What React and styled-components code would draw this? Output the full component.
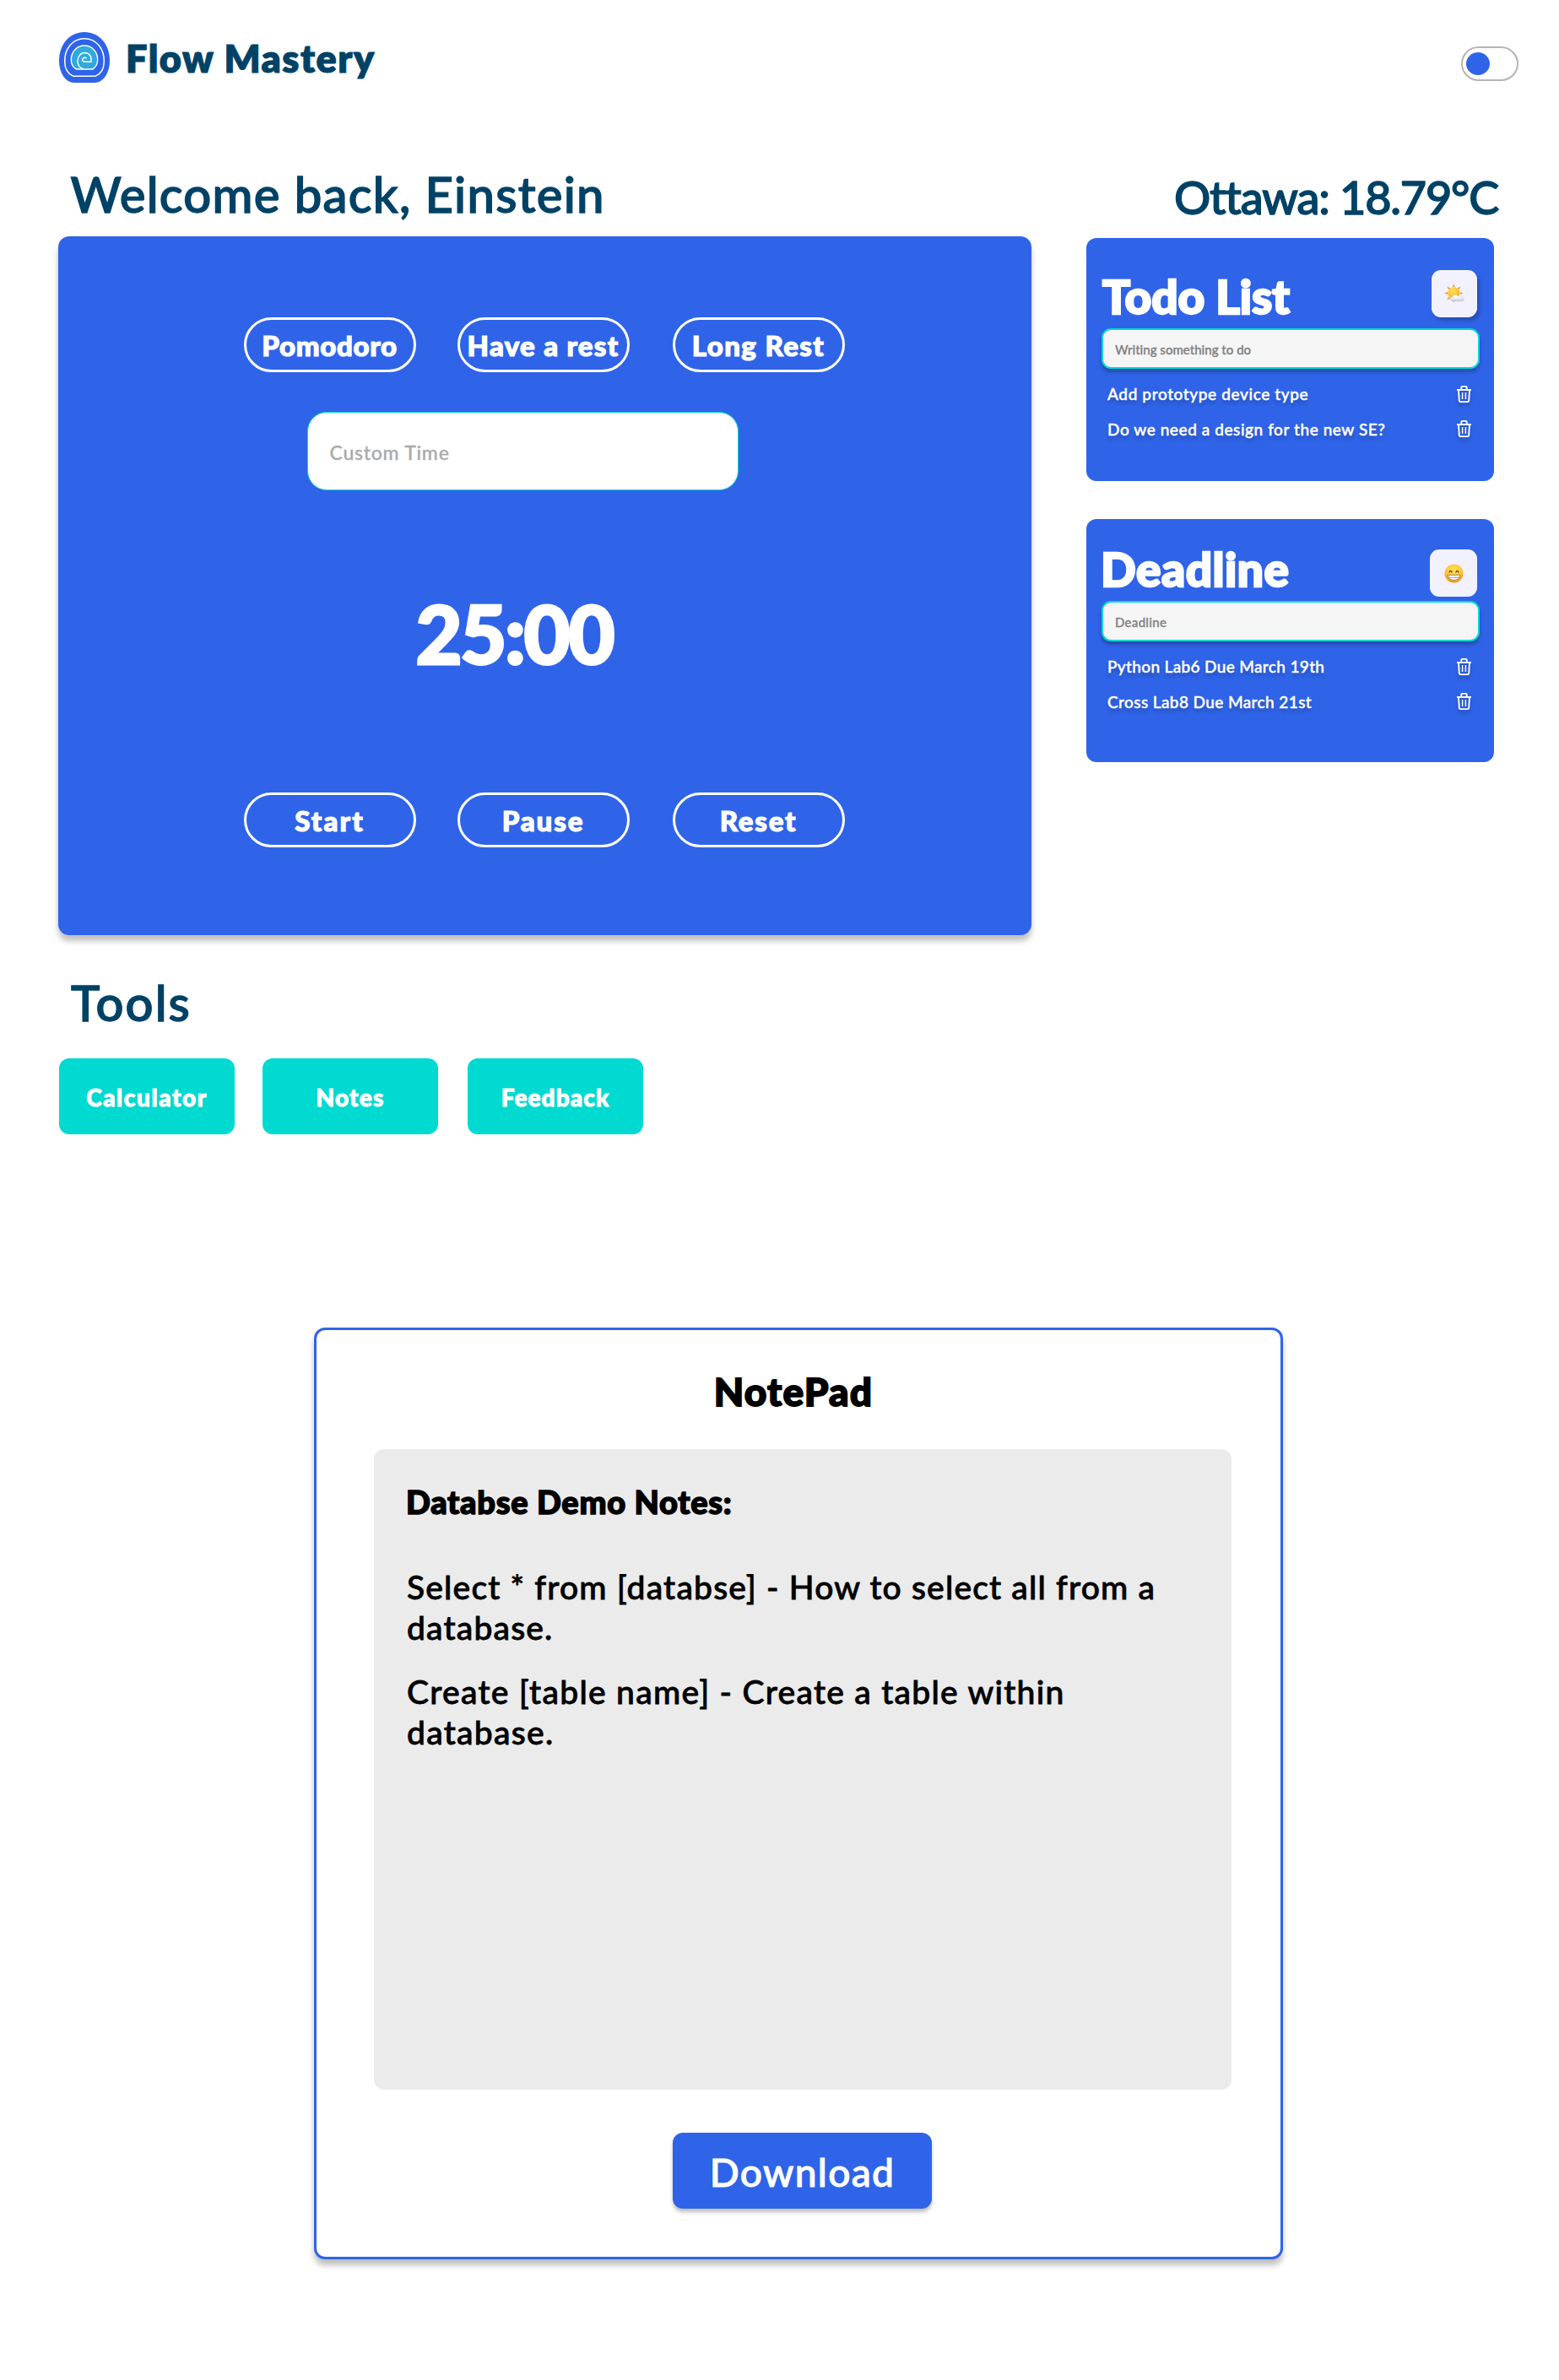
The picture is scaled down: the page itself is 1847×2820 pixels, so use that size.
import React from "react";
import styled, { createGlobalStyle } from "styled-components";

const c = {
  blue: "#2f64e9",
  navy: "#004266",
  teal: "#00dad0",
  input: "#f5f5f5",
  badge: "#f2f2ff",
  note: "#ebebeb",
};

const GlobalStyle = createGlobalStyle`
  *, *::before, *::after { box-sizing: border-box; }
  body { margin: 0; background: #fff; font-family: Lato, "Open Sans", sans-serif; }
  h1, h2, h3, p, ul { margin: 0; padding: 0; }
  button, input { font-family: inherit; }
`;

const Page = styled.div`
  width: 1847px;
  height: 2820px;
  padding-top: 38px;
  background: #fff;
  overflow: hidden;
`;

const Header = styled.header`
  display: flex;
  align-items: center;
  justify-content: space-between;
  height: 60px;
  padding: 0 48px 0 70px;
`;

const Brand = styled.div`
  display: flex;
  align-items: center;
  gap: 19px;
  color: ${c.navy};
  font-size: 45px;
  line-height: 45px;
  font-weight: 800;
  letter-spacing: 1.5px;
  -webkit-text-stroke: 1px currentColor;
  span { padding-top: 2px; }
`;

const Toggle = styled.button`
  width: 68px;
  height: 41px;
  margin-top: 15px;
  padding: 0 4px;
  display: flex;
  align-items: center;
  background: #fff;
  border: 2px solid #b4b4b4;
  border-radius: 21px;
`;

const Knob = styled.span`
  width: 28px;
  height: 27px;
  border-radius: 50%;
  background: ${c.blue};
`;

const Dashboard = styled.main`
  display: grid;
  grid-template-columns: 1153px 483px;
  column-gap: 65.5px;
  padding: 102px 0 0 68.5px;
`;

const Heading = styled.h2`
  height: ${(p) => p.$h}px;
  padding: ${(p) => p.$pad};
  color: ${c.navy};
  font-size: ${(p) => p.$size}px;
  line-height: ${(p) => p.$size}px;
  font-weight: 500;
  letter-spacing: ${(p) => p.$ls}px;
  white-space: nowrap;
  -webkit-text-stroke: 1.4px currentColor;
`;

const TimerCard = styled.section`
  height: 828px;
  padding: 96px 0 0 220px;
  color: #fff;
  background: ${c.blue};
  border-radius: 13px;
  box-shadow: 0 7px 7px rgba(0, 0, 0, 0.25);
`;

const ButtonRow = styled.div`
  display: grid;
  grid-template-columns: 253px 255px 204px;
`;

const PillButton = styled.button`
  width: 204px;
  height: 65px;
  padding: 1px 0 0;
  color: #fff;
  background: transparent;
  border: 3px solid #fff;
  border-radius: 33px;
  font-size: 33px;
  line-height: 33px;
  font-weight: 900;
  letter-spacing: ${(p) => p.$ls}px;
  white-space: nowrap;
  -webkit-text-stroke: 1.2px currentColor;
`;

const TimeInput = styled.input`
  display: block;
  width: 511px;
  height: 93px;
  margin: 47px 0 0 75px;
  padding: 3px 26px 0;
  background: #fff;
  border: 1.5px solid ${c.teal};
  border-radius: 23px;
  font-size: 23px;
  font-weight: 500;
  letter-spacing: 0.75px;
  &::placeholder { color: #aaa; opacity: 1; -webkit-text-stroke: 0.3px #aaa; }
`;

const Clock = styled.div`
  margin: 122px 0 141px 204px;
  font-size: 95px;
  line-height: 95px;
  font-weight: 900;
  letter-spacing: -2.3px;
  -webkit-text-stroke: 3px currentColor;
`;

const Panels = styled.div`
  display: flex;
  flex-direction: column;
  gap: 45px;
`;

const Panel = styled.section`
  height: 288px;
  padding: 0 17px 0 18px;
  color: #fff;
  background: ${c.blue};
  border-radius: 12px;
`;

const PanelHead = styled.div`
  display: flex;
  justify-content: space-between;
  align-items: flex-start;
  height: ${(p) => p.$h}px;
  padding-right: 3px;
`;

const PanelTitle = styled.h3`
  margin: ${(p) => p.$m};
  font-size: 55px;
  line-height: 55px;
  font-weight: 900;
  letter-spacing: ${(p) => p.$ls}px;
  -webkit-text-stroke: 2.4px currentColor;
`;

const Badge = styled.div`
  width: ${(p) => p.$w}px;
  height: 56px;
  margin-top: ${(p) => p.$top}px;
  display: flex;
  align-items: center;
  justify-content: center;
  background: ${c.badge};
  border-radius: 11px;
  box-shadow: ${(p) => (p.$shadow ? "3px 4px 4px rgba(0, 0, 0, 0.22)" : "none")};
`;

const PanelInput = styled.input`
  display: block;
  width: 448px;
  height: 48px;
  padding: 1px 14px 0;
  background: ${c.input};
  border: 2px solid ${c.teal};
  border-radius: 11px;
  box-shadow: 0 4px 4px rgba(0, 0, 0, 0.25);
  font-size: 15px;
  font-weight: 500;
  letter-spacing: ${(p) => p.$ls}px;
  &::placeholder { color: #808080; opacity: 1; -webkit-text-stroke: 0.3px #808080; }
`;

const List = styled.ul`
  margin-top: 9px;
  list-style: none;
`;

const Item = styled.li`
  display: flex;
  align-items: center;
  justify-content: space-between;
  height: 41.5px;
  padding: 0 10px 0 7px;
  font-size: 19px;
  line-height: 19px;
  font-weight: 500;
  letter-spacing: ${(p) => p.$ls}px;
  text-shadow: 0 4px 4px rgba(0, 0, 0, 0.25);
  -webkit-text-stroke: 0.45px currentColor;
  white-space: nowrap;
  svg { filter: drop-shadow(0 4px 2px rgba(0, 0, 0, 0.25)); overflow: visible; }
`;

const Tools = styled.section`
  padding: 51px 0 0 70px;
`;

const ToolRow = styled.div`
  display: grid;
  grid-template-columns: 241px 243px 208px;
`;

const ToolButton = styled.button`
  width: 208px;
  height: 90px;
  padding: 1px 0 0;
  color: #fff;
  background: ${c.teal};
  border: 0;
  border-radius: 12px;
  font-size: 28px;
  font-weight: 900;
  letter-spacing: ${(p) => p.$ls}px;
  -webkit-text-stroke: 1px currentColor;
`;

const NotePad = styled.section`
  width: 1148px;
  height: 1104px;
  margin: 229px 0 0 372px;
  padding: 50px 58px 0 68px;
  display: flex;
  flex-direction: column;
  background: #fff;
  border: 3px solid ${c.blue};
  border-radius: 13px;
  box-shadow: 0 7px 7px rgba(0, 0, 0, 0.25);
`;

const PadTitle = styled.h2`
  padding-right: 22px;
  text-align: center;
  font-size: 46px;
  line-height: 46px;
  font-weight: 900;
  letter-spacing: 1.2px;
  -webkit-text-stroke: 1.8px currentColor;
`;

const NoteArea = styled.article`
  width: 1016px;
  height: 759px;
  margin-top: 45px;
  padding: 44px 60px 0 38px;
  background: ${c.note};
  border-radius: 12px;
`;

const NoteTitle = styled.h3`
  margin-bottom: 58px;
  font-size: 38px;
  line-height: 37px;
  font-weight: 900;
  letter-spacing: 0.7px;
  -webkit-text-stroke: 1.5px currentColor;
`;

const NoteLine = styled.p`
  margin-bottom: 27.4px;
  padding-left: 1px;
  font-size: 39px;
  line-height: 48.3px;
  font-weight: 500;
  letter-spacing: ${(p) => p.$ls}px;
  -webkit-text-stroke: 0.8px currentColor;
`;

const Download = styled.button`
  width: 307px;
  height: 90px;
  margin: 51px 0 0 354px;
  padding: 2px 0 0;
  color: #fff;
  background: ${c.blue};
  border: 0;
  border-radius: 12px;
  box-shadow: 0 4px 4px rgba(0, 0, 0, 0.25);
  font-size: 46px;
  font-weight: 500;
  letter-spacing: 1.4px;
  -webkit-text-stroke: 1px currentColor;
`;

const Logo = () => (
  <svg width="60" height="60" viewBox="0 0 60 60" fill="none">
    <path d="M30 0C47 0 60 14 60 34C60 48 52.500 60 42 60H18C7.500 60 0 48 0 34C0 14 13 0 30 0Z" fill={c.blue} />
    <path d="M17 52.300H43C50 49.500 53.300 42.500 53.300 34.500C53.300 19 43.500 7.700 30 7.700S6.700 19 6.700 34.500C6.700 42.500 10 49.500 17 52.300Z" stroke="#fff" strokeWidth="1.500" />
    <path d="M21 44H40C43.500 41.500 45.700 38 45.700 32.500C45.700 23 38.500 16 30 16S14.300 23 14.300 32.500C14.300 38 17 42.500 21 44Z" fill="#2fa9e0" stroke="#fff" strokeWidth="1.400" />
    <path d="M29 44C24.500 42.500 22 39 22 34.500C22 28.800 25.500 24.500 30.500 24.500C35 24.500 38 28 38 32V35.200H30.500C28.400 35.200 27.500 33.800 27.800 32.300C28.200 30.300 31 29.400 32.600 31.200" stroke="#fff" strokeWidth="1.500" />
  </svg>
);

const Trash = () => (
  <svg width="17" height="20" viewBox="0 0 17 20" fill="none" stroke="#fff" strokeWidth="1.900" strokeLinejoin="round">
    <path d="M0 5H17" />
    <path d="M5.300 5V2Q5.300 .9 6.400 .9H10.600Q11.700 .9 11.700 2V5" />
    <path d="M2 5L2.800 17.700Q2.900 19.100 4.300 19.100H12.700Q14.100 19.100 14.200 17.700L15 5" />
    <path d="M6.600 8V16M10.400 8V16" strokeWidth="1.500" />
  </svg>
);

const SunCloud = () => (
  <svg width="24" height="24" viewBox="0 0 24 24">
    <defs>
      <radialGradient id="sun" cx=".4" cy=".3" r=".8">
        <stop offset="0" stopColor="#ffe45a" />
        <stop offset="1" stopColor="#f5a81c" />
      </radialGradient>
      <linearGradient id="cloud" x1="0" y1="0" x2="0" y2="1">
        <stop offset=".3" stopColor="#fff" />
        <stop offset="1" stopColor="#c0cad6" />
      </linearGradient>
    </defs>
    <g fill="#f0a12b">
      {[0, 45, 90, 135, 180, 225, 270, 315].map((a) => (
        <path key={a} d="M9.800 4.200L11.300 .2L12.800 4.200Z" transform={`rotate(${a} 11.300 11.500)`} />
      ))}
    </g>
    <circle cx="11.300" cy="11.300" r="7" fill="url(#sun)" />
    <path d="M10.300 20.800C8.500 20.800 7.300 19.600 7.300 18.200C7.300 16.600 8.600 15.600 10.200 15.700C10.700 13.900 12 13.200 13.500 13.300C15 13.400 16 14.200 16.500 15.300C17.300 14.700 19 14.700 19.800 16C21.900 15.800 23.400 16.900 23.400 18.400C23.400 19.900 22.200 20.800 20.500 20.800Z" fill="url(#cloud)" stroke="#b8c2ce" strokeWidth=".45" />
  </svg>
);

const Grin = () => (
  <svg width="23" height="23" viewBox="0 0 23 23">
    <defs>
      <radialGradient id="face" cx=".5" cy=".35" r=".65">
        <stop offset="0" stopColor="#ffe75a" />
        <stop offset=".65" stopColor="#fdc433" />
        <stop offset="1" stopColor="#ec941b" />
      </radialGradient>
    </defs>
    <circle cx="11.500" cy="11.500" r="11" fill="url(#face)" />
    <path d="M6.100 10Q7.600 6.800 9.100 10M13.900 10Q15.400 6.800 16.900 10" fill="none" stroke="#5c3510" strokeWidth="1.300" strokeLinecap="round" />
    <path d="M4 13.300H19Q18.200 19.400 11.500 19.400T4 13.300Z" fill="#fff" stroke="#94611f" strokeWidth=".8" />
    <path d="M4.800 16Q11.500 17.200 18.200 16" fill="none" stroke="#8d7750" strokeWidth=".7" />
  </svg>
);

const modes = [
  { label: "Pomodoro", ls: 0.7 },
  { label: "Have a rest", ls: 1.3 },
  { label: "Long Rest", ls: 1.4 },
];
const controls = [
  { label: "Start", ls: 2.2 },
  { label: "Pause", ls: 1.9 },
  { label: "Reset", ls: 1.8 },
];
const tools = [
  { label: "Calculator", ls: 1.6 },
  { label: "Notes", ls: 1.2 },
  { label: "Feedback", ls: 1.1 },
];
const todos = [
  { text: "Add prototype device type", ls: 0.62 },
  { text: "Do we need a design for the new SE?", ls: 0.57 },
];
const deadlines = [
  { text: "Python Lab6 Due March 19th", ls: 0.35 },
  { text: "Cross Lab8 Due March 21st", ls: 0.4 },
];

const Pills = ({ items }) => (
  <ButtonRow>
    {items.map((b) => (
      <PillButton key={b.label} $ls={b.ls}>{b.label}</PillButton>
    ))}
  </ButtonRow>
);

const Items = ({ items }) => (
  <List>
    {items.map((t) => (
      <Item key={t.text} $ls={t.ls}>
        <span>{t.text}</span>
        <Trash />
      </Item>
    ))}
  </List>
);

export default function App() {
  return (
    <Page>
      <GlobalStyle />
      <Header>
        <Brand>
          <Logo />
          <span>Flow Mastery</span>
        </Brand>
        <Toggle aria-label="Theme">
          <Knob />
        </Toggle>
      </Header>

      <Dashboard>
        <div>
          <Heading $size={58} $h={80} $ls={1.27} $pad="1px 0 0 15px">Welcome back, Einstein</Heading>
          <TimerCard>
            <Pills items={modes} />
            <TimeInput placeholder="Custom Time" />
            <Clock>25:00</Clock>
            <Pills items={controls} />
          </TimerCard>
        </div>
        <div>
          <Heading $size={54} $h={82} $ls={-1.2} $pad="7px 0 0 104px">Ottawa: 18.79°C</Heading>
          <Panels>
            <Panel>
              <PanelHead $h={107}>
                <PanelTitle $m="42px 0 0 1px" $ls={-0.1}>Todo List</PanelTitle>
                <Badge $w={54} $top={38} $shadow>
                  <SunCloud />
                </Badge>
              </PanelHead>
              <PanelInput placeholder="Writing something to do" $ls={0.02} />
              <Items items={todos} />
            </Panel>
            <Panel>
              <PanelHead $h={97}>
                <PanelTitle $m="32px 0 0 -1px" $ls={0.5}>Deadline</PanelTitle>
                <Badge $w={56} $top={36}>
                  <Grin />
                </Badge>
              </PanelHead>
              <PanelInput placeholder="Deadline" $ls={0.3} />
              <Items items={deadlines} />
            </Panel>
          </Panels>
        </div>
      </Dashboard>

      <Tools>
        <Heading $size={58} $h={95} $ls={2.1} $pad="0 0 0 14px">Tools</Heading>
        <ToolRow>
          {tools.map((t) => (
            <ToolButton key={t.label} $ls={t.ls}>{t.label}</ToolButton>
          ))}
        </ToolRow>
      </Tools>

      <NotePad>
        <PadTitle>NotePad</PadTitle>
        <NoteArea>
          <NoteTitle>Databse Demo Notes:</NoteTitle>
          <NoteLine $ls={1.17}>Select * from [databse] - How to select all from a database.</NoteLine>
          <NoteLine $ls={1.28}>Create [table name] - Create a table within database.</NoteLine>
        </NoteArea>
        <Download>Download</Download>
      </NotePad>
    </Page>
  );
}
